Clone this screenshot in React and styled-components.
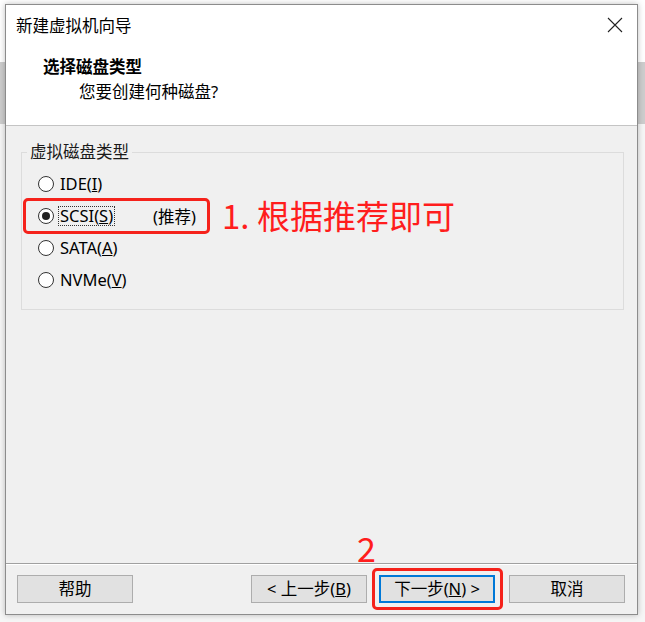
import React from "react";
import styled, { createGlobalStyle } from "styled-components";

const GlobalStyle = createGlobalStyle`
  html, body {
    margin: 0;
    padding: 0;
  }
  body {
    width: 645px;
    height: 622px;
    overflow: hidden;
    background: linear-gradient(to bottom, #ffffff 0 62px, #cdcdcd 62px 124px, #f6f6f6 124px);
    font-family: "Noto Sans", "Noto Sans CJK SC", sans-serif;
    color: #000;
  }
`;

const Window = styled.div`
  position: relative;
  box-sizing: border-box;
  margin: 4px 0 0 5px;
  width: 633px;
  height: 611px;
  border: 1px solid #8c8c8c;
  background: #f0f0f0;
  box-shadow: 0 0 6px rgba(0, 0, 0, 0.25);
  display: flex;
  flex-direction: column;
`;

const TitleBar = styled.div`
  height: 40px;
  flex: none;
  background: #fff;
  display: flex;
  align-items: center;
  justify-content: space-between;
  padding: 0 14px 0 10px;
  font-size: 16.5px;
`;

const CloseIcon = () => (
  <svg width="16" height="16" viewBox="0 0 16 16">
    <path d="M1 1 L15 15 M15 1 L1 15" stroke="#222" strokeWidth="1.1" />
  </svg>
);

const Header = styled.div`
  height: 81px;
  flex: none;
  box-sizing: border-box;
  background: #fff;
  border-bottom: 1px solid #c4c4c4;
  padding: 10px 0 0 37px;

  h2 {
    margin: 0;
    font-size: 16.5px;
    font-weight: 700;
    line-height: 24px;
  }

  p {
    margin: 1px 0 0 36px;
    font-size: 16.5px;
    line-height: 24px;
  }
`;

const Content = styled.div`
  flex: 1;
  padding: 16px 13px 0 15px;
`;

const Group = styled.fieldset`
  margin: 0;
  padding: 6px 0 13px 0;
  border: 1px solid #dcdcdc;
  display: flex;
  flex-direction: column;

  legend {
    margin-left: 5px;
    padding: 0 3px;
    font-size: 16.5px;
    line-height: 20px;
    color: #1a1a1a;
  }
`;

const Row = styled.label`
  height: 32px;
  padding-left: 16px;
  display: flex;
  align-items: center;
  gap: 6px;
  font-size: 16.5px;
`;

const Radio = styled.span`
  box-sizing: border-box;
  width: 16px;
  height: 16px;
  border-radius: 50%;
  border: 1px solid #333;
  background: #fff;
  display: flex;
  align-items: center;
  justify-content: center;

  &::after {
    content: "";
    width: 8px;
    height: 8px;
    border-radius: 50%;
    background: ${({ $checked }) => ($checked ? "#222" : "transparent")};
  }
`;

const Caption = styled.span`
  line-height: 18px;
  padding: 0 1px;
  outline: ${({ $focus }) => ($focus ? "1px dotted #333" : "none")};
  margin-left: -1px;
`;

const Recommend = styled.span`
  margin-left: 33px;
`;

const Footer = styled.div`
  height: 51px;
  flex: none;
  box-sizing: border-box;
  border-top: 1px solid #a0a0a0;
  box-shadow: inset 0 1px 0 #fff;
  padding: 11px 12px 0 11px;
  display: flex;
  align-items: flex-start;
`;

const Button = styled.button`
  box-sizing: border-box;
  width: 116px;
  height: 28px;
  margin-left: ${({ $gap }) => $gap || 0}px;
  background: #e1e1e1;
  border: 1px solid ${({ $primary }) => ($primary ? "#0078d7" : "#adadad")};
  box-shadow: ${({ $primary }) => ($primary ? "inset 0 0 0 1px #0078d7" : "none")};
  font-family: "Noto Sans", "Noto Sans CJK SC", sans-serif;
  font-size: 16.5px;
  color: #000;
  padding: 0;
  line-height: 24px;
`;

const Spacer = styled.div`
  flex: 1;
`;

const Mark = styled.div`
  position: absolute;
  box-sizing: border-box;
  border: 3px solid #f5221b;
  border-radius: 5px;
`;

const Note = styled.div`
  position: absolute;
  font-family: "Noto Sans CJK SC", sans-serif;
  color: #ff1d1d;
  line-height: 40px;
  white-space: nowrap;
  font-size: ${({ $size }) => $size}px;
`;

const options = [
  { name: "IDE", key: "I" },
  { name: "SCSI", key: "S", checked: true },
  { name: "SATA", key: "A" },
  { name: "NVMe", key: "V" },
];

export default function App() {
  return (
    <>
      <GlobalStyle />
      <Window>
        <TitleBar>
          <span>新建虚拟机向导</span>
          <CloseIcon />
        </TitleBar>
        <Header>
          <h2>选择磁盘类型</h2>
          <p>您要创建何种磁盘?</p>
        </Header>
        <Content>
          <Group>
            <legend>虚拟磁盘类型</legend>
            {options.map((o) => (
              <Row key={o.name}>
                <Radio $checked={o.checked} />
                <Caption $focus={o.checked}>
                  {o.name}(<u>{o.key}</u>)
                </Caption>
                {o.checked && <Recommend>(推荐)</Recommend>}
              </Row>
            ))}
          </Group>
        </Content>
        <Footer>
          <Button>帮助</Button>
          <Spacer />
          <Button>&lt; 上一步(<u>B</u>)</Button>
          <Button $gap={12} $primary>
            下一步(<u>N</u>) &gt;
          </Button>
          <Button $gap={14}>取消</Button>
        </Footer>

        <Mark style={{ left: 17, top: 193, width: 187, height: 36 }} />
        <Note $size={33} style={{ left: 216, top: 190 }}>
          1. 根据推荐即可
        </Note>
        <Note $size={34} style={{ left: 351, top: 523 }}>
          2
        </Note>
        <Mark style={{ left: 366, top: 563, width: 131, height: 42 }} />
      </Window>
    </>
  );
}
